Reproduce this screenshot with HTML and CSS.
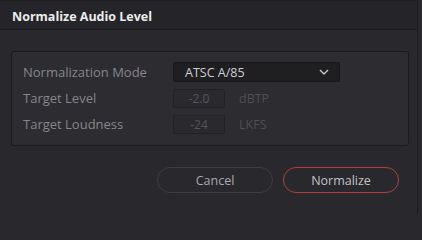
FILE: index.html
```html
<!DOCTYPE html>
<html>
<head>
<meta charset="utf-8">
<link rel="stylesheet" href="styles.css">
</head>
<body>
<div class="dialog">
  <div class="titlebar"><span class="title">Normalize Audio Level</span></div>
  <div class="content">
    <div class="group">
      <div class="row">
        <span class="label">Normalization Mode</span>
        <div class="select">
          <span class="select-text">ATSC A/85</span>
          <svg class="chevron" width="10" height="6" viewBox="0 0 10 6"><path d="M1 1 L5 5 L9 1" fill="none" stroke="#c9c9cc" stroke-width="1.4"/></svg>
        </div>
      </div>
      <div class="row">
        <span class="label">Target Level</span>
        <div class="field">-2.0</div>
        <span class="unit">dBTP</span>
      </div>
      <div class="row">
        <span class="label">Target Loudness</span>
        <div class="field">-24</div>
        <span class="unit">LKFS</span>
      </div>
    </div>
    <div class="buttons">
      <button class="btn btn-cancel">Cancel</button>
      <button class="btn btn-primary">Normalize</button>
    </div>
  </div>
</div>
</body>
</html>
```
FILE: styles.css
```css
html, body {
  margin: 0;
  padding: 0;
  background: #28282d;
}
body {
  width: 422px;
  height: 213px;
  overflow: hidden;
  font-family: "Open Sans", "Noto Sans", sans-serif;
}
.dialog {
  width: 418px;
  height: 213px;
  border-right: 1px solid #1c1c1f;
  box-sizing: border-box;
  background: #28282d;
}
.titlebar {
  height: 30px;
  box-sizing: border-box;
  background: #252529;
  border-top: 1px solid #1f1f22;
  border-bottom: 1px solid #1b1b1e;
  display: flex;
  align-items: center;
  padding-left: 12px;
}
.title {
  color: #ececec;
  font-weight: 700;
  font-size: 12.5px;
  padding-top: 2px;
}
.content {
  padding: 21px 0 0 11px;
}
.group {
  width: 398px;
  height: 95px;
  box-sizing: border-box;
  border: 1px solid #1b1b1e;
  border-radius: 3px;
  background: #2c2c31;
  padding: 10px 0 0 11px;
  display: flex;
  flex-direction: column;
  gap: 6px;
}
.row {
  display: flex;
  align-items: center;
  height: 20px;
}
.label {
  width: 150px;
  color: #86868b;
  font-size: 13px;
}
.select {
  width: 167px;
  height: 20px;
  box-sizing: border-box;
  background: #1f1f22;
  border: 1px solid #18181a;
  border-radius: 2px;
  display: flex;
  align-items: center;
  justify-content: space-between;
  padding: 0 10px 0 11px;
}
.select-text {
  color: #cfcfd2;
  font-size: 12.5px;
}
.field {
  width: 52px;
  height: 19px;
  box-sizing: border-box;
  border: 1px solid #222225;
  border-radius: 2px;
  background: #2a2a2e;
  color: #55555a;
  font-size: 12px;
  display: flex;
  align-items: center;
  justify-content: center;
}
.unit {
  margin-left: 14px;
  color: #4f4f54;
  font-size: 12.5px;
}
.buttons {
  display: flex;
  justify-content: flex-end;
  gap: 10px;
  width: 388px;
  margin-top: 21px;
}
.btn {
  width: 116px;
  height: 26px;
  border-radius: 13px;
  background: transparent;
  font-family: "Open Sans", "Noto Sans", sans-serif;
  font-size: 12.5px;
  padding: 0;
}
.btn-cancel {
  border: 1px solid #3d3d43;
  color: #a9a9ad;
}
.btn-primary {
  border: 1px solid #b0403f;
  color: #c2c2c6;
}
```
